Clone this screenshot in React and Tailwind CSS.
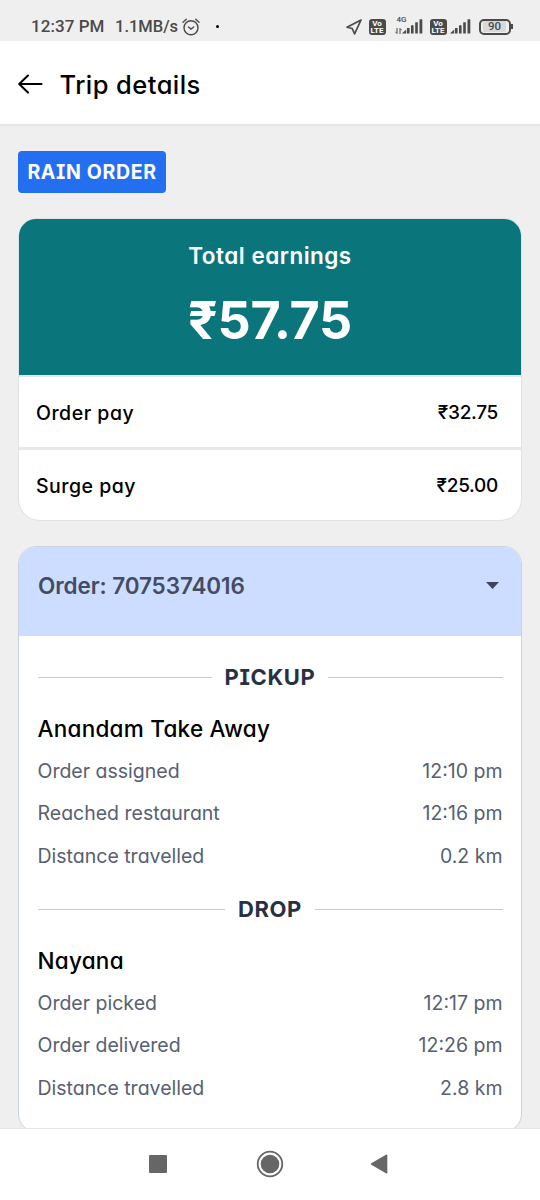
import clsx from 'clsx'

const pickup = [
  { label: 'Order assigned', value: '12:10 pm' },
  { label: 'Reached restaurant', value: '12:16 pm' },
  { label: 'Distance travelled', value: '0.2 km' },
]

const drop = [
  { label: 'Order picked', value: '12:17 pm' },
  { label: 'Order delivered', value: '12:26 pm' },
  { label: 'Distance travelled', value: '2.8 km' },
]

function Signal() {
  return (
    <svg width="21" height="15" viewBox="0 0 21 15" fill="#4a4a4a">
      <path d="M0 14.5 4.2 10.5V14.5Z" />
      <rect x="5" y="9" width="2.6" height="5.5" />
      <rect x="9" y="6.3" width="2.6" height="8.2" />
      <rect x="13.2" y="3.3" width="2.6" height="11.2" />
      <rect x="17.5" y="0.3" width="2.8" height="14.2" />
    </svg>
  )
}

function VoLte() {
  return (
    <div className="flex h-[16px] w-[17px] flex-col items-center justify-center rounded-[3px] bg-[#4a4a4a] text-[8px] leading-[7px] font-bold text-white">
      <span>Vo</span>
      <span>LTE</span>
    </div>
  )
}

function StatusBar() {
  return (
    <div className="flex h-[41px] shrink-0 items-center pt-3 pr-[27.5px] pl-[31px] font-['Roboto',sans-serif] text-[17px] font-medium text-[#4a4a4a]">
      <span className="w-[75px] tracking-[0.05px] whitespace-nowrap">12:37 PM</span>
      <span className="ml-[9px] w-[63px] pt-px text-[16.5px] whitespace-nowrap">1.1MB/s</span>
      <svg className="ml-1" width="18" height="18" viewBox="0 0 18 18" fill="none" stroke="#4a4a4a" strokeWidth="1.4" strokeLinecap="round">
        <circle cx="9" cy="9.7" r="7" />
        <path d="M1 4.2 4.3 1.2M17 4.2 13.7 1.2M6.5 9l2.5 2 2.7-2" />
      </svg>
      <span className="ml-4 size-[3px] rounded-full bg-black" />
      <div className="ml-auto flex items-center">
        <svg width="16" height="16" viewBox="0 0 16 16" fill="none" stroke="#4a4a4a" strokeWidth="1.7" strokeLinejoin="round">
          <path d="M15 1 1 8.2 6.2 9.5 8.6 14.8Z" />
        </svg>
        <div className="ml-[7px]"><VoLte /></div>
        <div className="relative ml-[9px] flex h-[15px] w-[28px] items-end justify-end">
          <span className="absolute -top-[3px] left-[2px] text-[8px] leading-[8px]">4G</span>
          <svg className="absolute bottom-0 left-0" width="7" height="6" viewBox="0 0 7 6" fill="none" stroke="#4a4a4a" strokeWidth="1">
            <path d="M2 0v5.5M.3 3.7 2 5.5M5 6V.5M6.7 2.3 5 .5" />
          </svg>
          <Signal />
        </div>
        <div className="ml-[7px]"><VoLte /></div>
        <div className="ml-[3px]"><Signal /></div>
        <div className="ml-2 flex items-center">
          <div className="flex h-[16px] w-[32px] items-center justify-center rounded-[5px] border-2 border-[#4a4a4a] text-[11.5px] leading-none">
            <span className="bg-[#d9d9d9] px-[5px]">90</span>
          </div>
          <div className="h-[5px] w-[2px] bg-[#4a4a4a]" />
        </div>
      </div>
    </div>
  )
}

function Header() {
  return (
    <header className="flex h-[85px] shrink-0 items-center border-b-2 border-[#e4e4e4] bg-white pt-[4px] pl-[17.5px]">
      <svg className="mb-[2px]" width="25" height="20" viewBox="0 0 25 20" fill="none" stroke="#000" strokeWidth="2" strokeLinecap="round" strokeLinejoin="round">
        <path d="M10 1.5 1.2 10 10 18.5M1.5 10H23.5" />
      </svg>
      <h1 className="mt-[2px] ml-[17px] text-[25.5px] font-medium tracking-[0.45px]">Trip details</h1>
    </header>
  )
}

function PayRow({ label, value, className }) {
  return (
    <div className={clsx('flex items-center justify-between pt-[3px] pr-[23px] pl-[17px] text-[19.5px] font-medium', className)}>
      <span className="tracking-[0.5px]">{label}</span>
      <span className="text-[19px] tracking-[-0.3px]">{value}</span>
    </div>
  )
}

function Section({ title, name, rows }) {
  return (
    <section>
      <div className="flex h-8 items-center gap-[13px]">
        <div className="h-px flex-1 bg-[#c5cbd3]" />
        <h3 className="text-[22px] font-bold tracking-[0.6px] text-[#273142]">{title}</h3>
        <div className="h-px flex-1 bg-[#c5cbd3]" />
      </div>
      <h4 className="mt-[20px] text-[22.5px] leading-8 font-medium tracking-[0.25px]">{name}</h4>
      <div className="mt-[5px] text-[19.5px] text-[#566072]">
        {rows.map((row) => (
          <div key={row.label} className="flex h-[42.7px] items-center justify-between">
            <span>{row.label}</span>
            <span>{row.value}</span>
          </div>
        ))}
      </div>
    </section>
  )
}

function NavBar() {
  return (
    <nav className="flex h-[72px] shrink-0 items-center border-t border-[#e6e6e6] bg-white pb-px pl-[148.5px]">
      <div className="size-[18px] rounded-[1px] bg-[#666]" />
      <svg className="ml-[89px]" width="28" height="28" viewBox="0 0 28 28">
        <circle cx="14" cy="14" r="12.3" fill="none" stroke="#666" strokeWidth="1.8" />
        <circle cx="14" cy="14" r="9.3" fill="#666" />
      </svg>
      <svg className="ml-[86.5px]" width="18" height="20" viewBox="0 0 18 20" fill="#666">
        <path d="M1.3 9.2 16 .8Q17.3.2 17.3 1.6V18.4Q17.3 19.8 16 19.2L1.3 10.8Q0 10 1.3 9.2Z" />
      </svg>
    </nav>
  )
}

export default function App() {
  return (
    <div className="flex h-[1200px] w-[540px] flex-col overflow-hidden bg-[#efefef] font-['Inter',sans-serif] text-black [font-feature-settings:'cv11','cv08']">
      <StatusBar />
      <Header />
      <main className="flex min-h-0 flex-1 flex-col items-start overflow-hidden px-[18px] pt-[25px]">
        <div className="flex h-[42px] w-[148px] shrink-0 items-center justify-center rounded bg-[#246fef] pt-[2px] text-[19.5px] font-bold tracking-[0.65px] whitespace-nowrap text-white">
          RAIN ORDER
        </div>

        {/* Earnings */}
        <div className="mt-[25px] h-[303px] w-full shrink-0 overflow-hidden rounded-[22px] rounded-t-[18px] border border-[#dfe3e5] bg-white">
          <div className="flex h-[156px] flex-col items-center bg-[#0b757c] pt-[21px] text-white">
            <p className="text-[22.5px] leading-8 font-semibold tracking-[0.5px]">Total earnings</p>
            <p className="mt-[19px] text-[52px] leading-[60px] font-bold tracking-[-0.3px]">₹57.75</p>
          </div>
          <PayRow label="Order pay" value="₹32.75" className="h-[72px] border-t-2 border-[#dfe5ec]" />
          <PayRow label="Surge pay" value="₹25.00" className="h-[73px] border-t-3 border-[#e8e8e8]" />
        </div>

        {/* Order */}
        <div className="mt-[25px] h-[586px] w-full shrink-0 overflow-hidden rounded-[18px] border border-[#ccd3de] bg-white">
          <div className="flex h-[89px] justify-between bg-[#cdddff] pt-[23px] pr-[22px] pl-[19px] text-[#434c62]">
            <h2 className="text-[22.5px] leading-8 font-semibold tracking-[-0.1px]">Order: 7075374016</h2>
            <svg className="mt-[12px]" width="13" height="7" viewBox="0 0 13 7" fill="#3d465d">
              <path d="M0 0H13L6.5 7Z" />
            </svg>
          </div>
          <div className="flex flex-col gap-[15px] px-[18.5px] pt-[25px]">
            <Section title="PICKUP" name="Anandam Take Away" rows={pickup} />
            <Section title="DROP" name="Nayana" rows={drop} />
          </div>
        </div>
      </main>
      <NavBar />
    </div>
  )
}
